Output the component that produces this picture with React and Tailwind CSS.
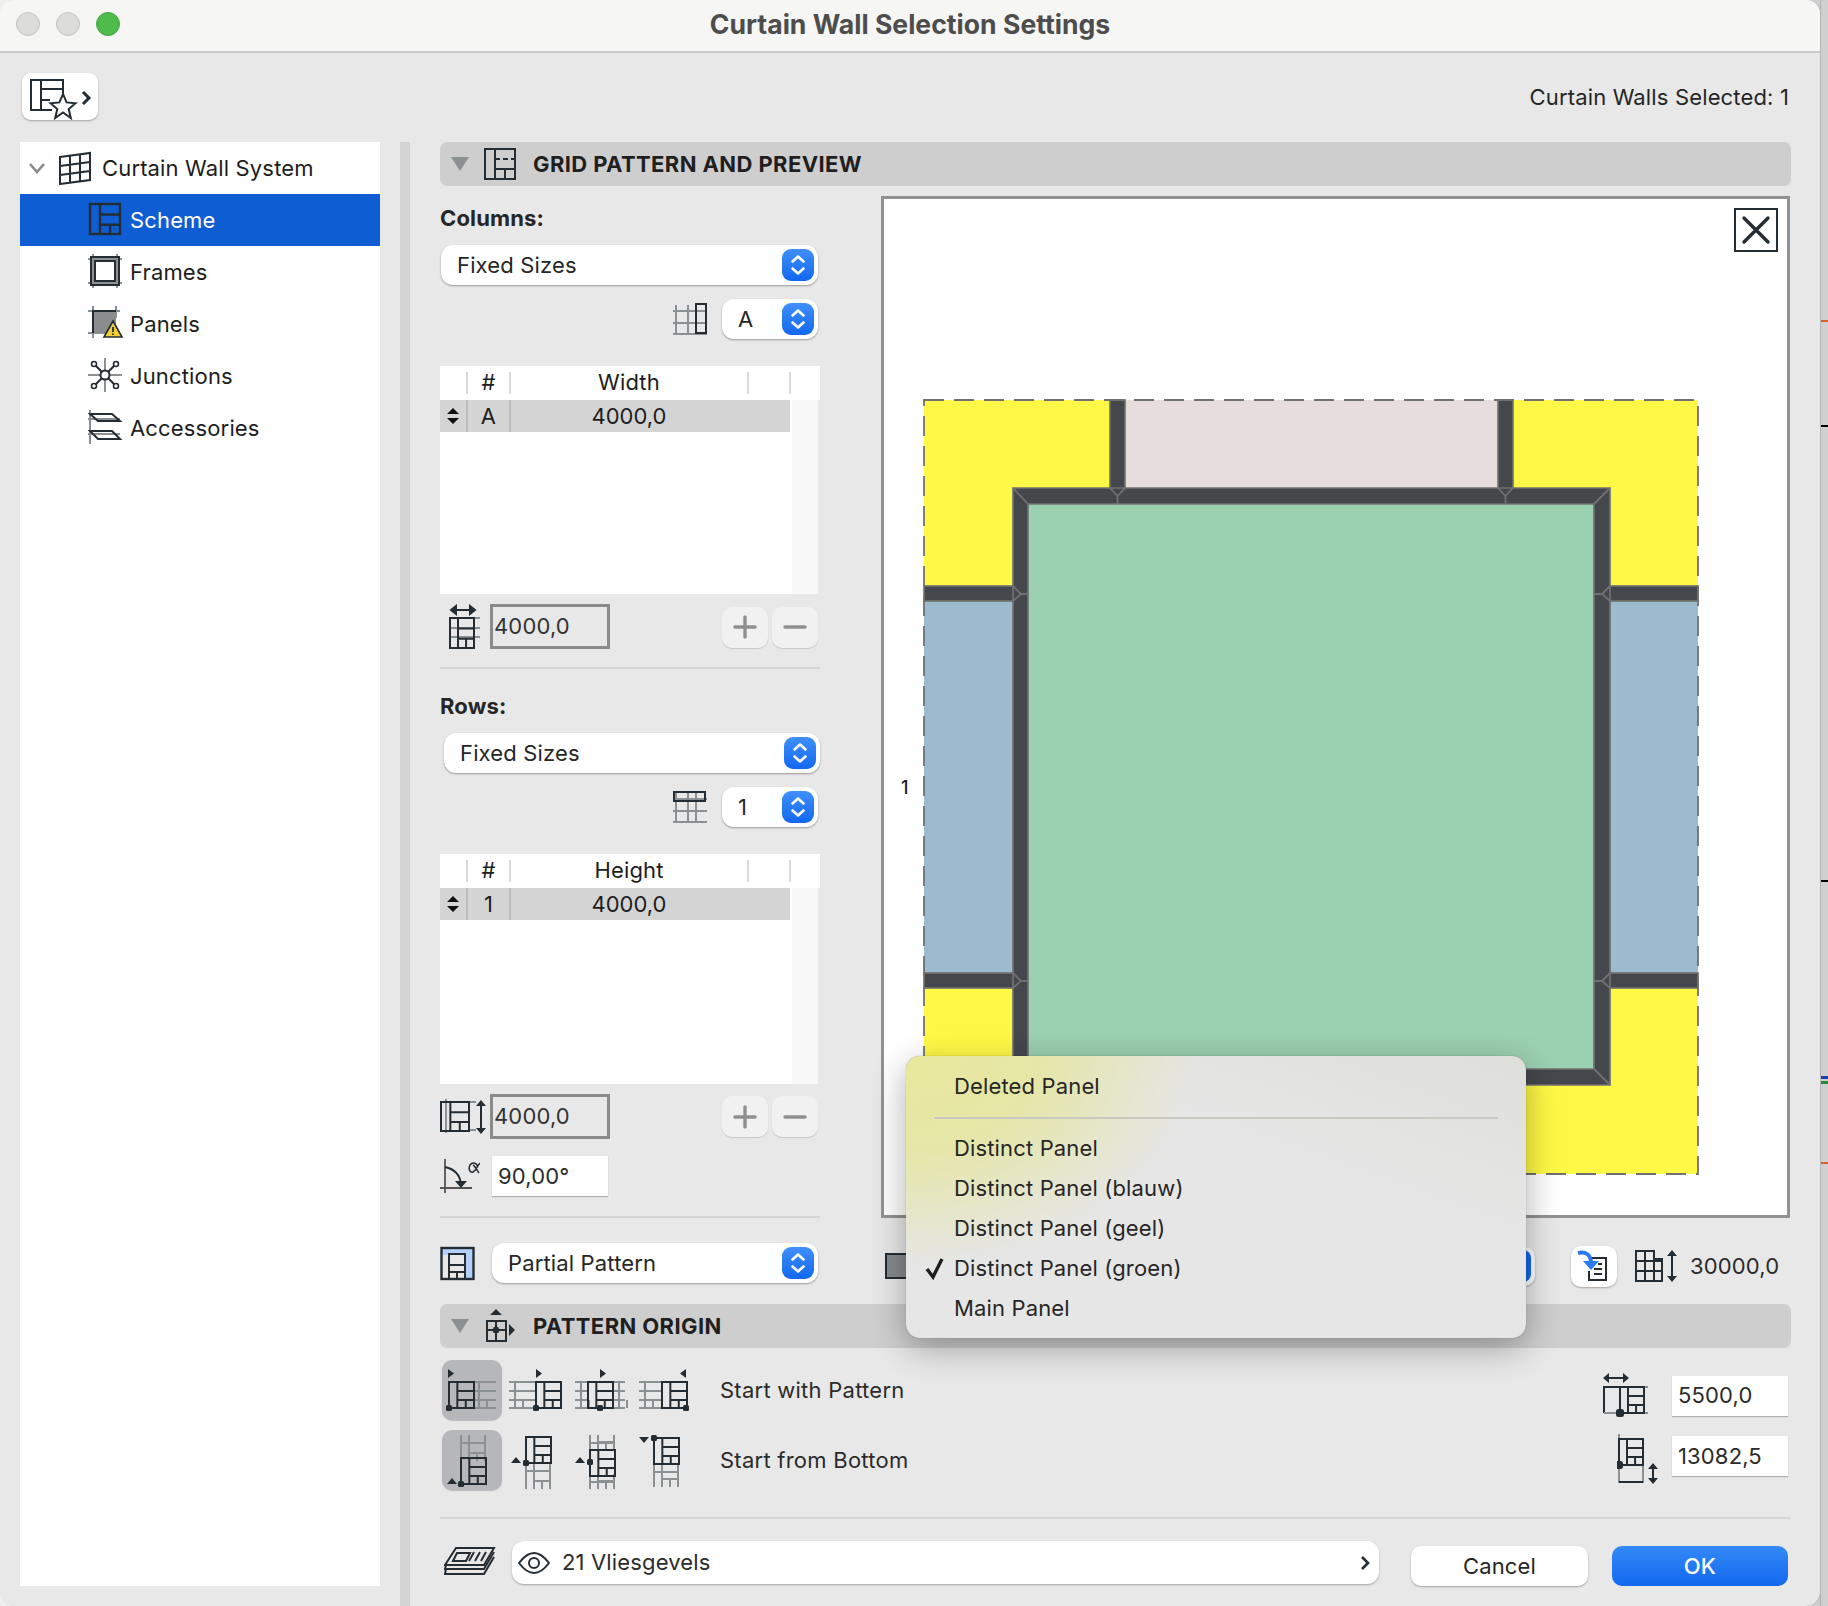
import React from 'react';

const ink = '#232d33';
const grey = '#8b9093';

// the dark "grid pattern" glyph used across the dialog
const Pat = ({ x = 0, y = 0, w = 25, h = 26, c = ink, sw = 2 }) => (
  <g fill="none" stroke={c} strokeWidth={sw}>
    <rect x={x} y={y} width={w} height={h} />
    <path d={`M${x + w / 3} ${y}V${y + h}M${x + w / 3} ${y + h * 0.35}H${x + w}M${x + w / 3} ${y + h * 0.69}H${x + w}M${x + w * 0.67} ${y + h * 0.69}V${y + h}`} />
  </g>
);

const GreyLinesH = ({ x1, x2, y = 22, c = grey }) => (
  <path
    fill="none"
    stroke={c}
    strokeWidth="2"
    d={`M${x1} ${y}H${x2}M${x1} ${y + 9}H${x2}M${x1} ${y + 18}H${x2}M${x1} ${y + 26}H${x2}M${x1 + 6} ${y}V${y + 26}M${x1 + 14} ${y + 18}V${y + 26}`}
  />
);

const GreyLinesV = ({ y1, y2, x = 20 }) => (
  <path
    fill="none"
    stroke={grey}
    strokeWidth="2"
    d={`M${x} ${y1}V${y2}M${x + 24} ${y1}V${y2}M${x + 8} ${y1}V${y2}M${x} ${y1 + 8}H${x + 24}M${x + 8} ${y2 - 8}H${x + 24}M${x + 16} ${y2 - 8}V${y2}`}
  />
);

const Dot = ({ x, y }) => <rect x={x - 3} y={y - 3} width="6" height="6" rx="1.5" fill={ink} />;

const ORIGIN_ICONS = [
  [
    <>
      <GreyLinesH x1={31} x2={54} />
      <Pat x={7} y={22} />
      <Dot x={7} y={48} />
      <path d="M6 9l6 4.5-6 4.5z" fill={ink} />
    </>,
    <>
      <GreyLinesH x1={3} x2={30} />
      <Pat x={30} y={22} />
      <Dot x={30} y={48} />
      <path d="M30 9l6 4.5-6 4.5z" fill={ink} />
    </>,
    <>
      <GreyLinesH x1={5} x2={18} />
      <GreyLinesH x1={43} x2={55} />
      <Pat x={18} y={22} />
      <Dot x={30} y={48} />
      <path d="M30 9l6 4.5-6 4.5z" fill={ink} />
    </>,
    <>
      <GreyLinesH x1={5} x2={28} />
      <Pat x={28} y={22} />
      <Dot x={52} y={48} />
      <path d="M52 9l-6 4.5 6 4.5z" fill={ink} />
    </>,
  ],
  [
    <>
      <GreyLinesV y1={5} y2={31} x={19} />
      <Pat x={19} y={28} />
      <Dot x={19} y={54} />
      <path d="M5 54l5-6 5 6z" fill={ink} />
    </>,
    <>
      <GreyLinesV y1={33} y2={59} />
      <Pat x={20} y={7} />
      <Dot x={20} y={33} />
      <path d="M5 33l5-6 5 6z" fill={ink} />
    </>,
    <>
      <GreyLinesV y1={5} y2={20} />
      <GreyLinesV y1={44} y2={59} />
      <Pat x={20} y={20} />
      <Dot x={20} y={32} />
      <path d="M5 33l5-6 5 6z" fill={ink} />
    </>,
    <>
      <GreyLinesV y1={34} y2={57} />
      <Pat x={20} y={8} />
      <Dot x={20} y={8} />
      <path d="M5 7h10l-5 6z" fill={ink} />
    </>,
  ],
];

const TREE = [
  {
    label: 'Scheme',
    active: true,
    icon: <Pat x={2} y={2} w={30} h={30} sw={2.4} />,
  },
  {
    label: 'Frames',
    icon: (
      <g fill="none" strokeWidth="2">
        <path stroke={grey} d="M0 5H34M0 29H34M5 0V34M29 0V34" />
        <rect x="3" y="3" width="28" height="28" stroke={ink} />
        <rect x="7" y="7" width="20" height="20" stroke={ink} />
      </g>
    ),
  },
  {
    label: 'Panels',
    icon: (
      <g>
        <path stroke={grey} strokeWidth="2" d="M0 5H32M0 27H24M5 0V32M28 0V12" />
        <rect x="5" y="5" width="23" height="22" fill="#8a8d8e" />
        <path stroke={ink} strokeWidth="2" fill="none" d="M5 27V5H28" />
        <path d="M25 15l9 16H16z" fill="#f5cf35" stroke={ink} strokeWidth="1.6" />
        <path d="M25 21v5M25 27.5v1.5" stroke={ink} strokeWidth="1.8" />
      </g>
    ),
  },
  {
    label: 'Junctions',
    icon: (
      <g fill="none">
        <path stroke={grey} strokeWidth="2" d="M17 0V34M0 17H34" />
        <path stroke={ink} strokeWidth="2" d="M7 7L27 27M27 7L7 27" />
        <circle cx="17" cy="17" r="4.5" fill="#fff" stroke={ink} strokeWidth="2" />
        <circle cx="6" cy="6" r="2.5" fill="#fff" stroke={ink} strokeWidth="1.6" />
        <circle cx="28" cy="6" r="2.5" fill="#fff" stroke={ink} strokeWidth="1.6" />
        <circle cx="6" cy="28" r="2.5" fill="#fff" stroke={ink} strokeWidth="1.6" />
        <circle cx="28" cy="28" r="2.5" fill="#fff" stroke={ink} strokeWidth="1.6" />
      </g>
    ),
  },
  {
    label: 'Accessories',
    icon: (
      <g fill="none">
        <path stroke={grey} strokeWidth="2" d="M2 0V34M0 9H32M0 24H32" />
        <path stroke={ink} strokeWidth="2" d="M2 4H24L32 11H10zM2 21H24L32 29H10z" />
      </g>
    ),
  },
];

const Stepper = () => (
  <span className="flex h-[32px] w-[32px] items-center justify-center rounded-[9px] bg-gradient-to-b from-[#3f8ffb] to-[#1067f0]">
    <svg width="32" height="32" fill="none" stroke="#fff" strokeWidth="2.6" strokeLinecap="round" strokeLinejoin="round">
      <path d="M10.5 12.5L16 7.5l5.5 5M10.5 19.5l5.5 5 5.5-5" />
    </svg>
  </span>
);

const Select = ({ value, className, pad = 'pl-[16px]' }) => (
  <div className={`flex h-[40px] items-center justify-between rounded-[12px] bg-white pr-[4px] text-[#262626] shadow-[0_1px_2px_rgba(0,0,0,0.35)] ${pad} ${className}`}>
    <span>{value}</span>
    <Stepper />
  </div>
);

const SmallGrid = ({ dark }) => (
  <svg width="36" height="34" fill="none" strokeWidth="2">
    <path stroke={grey} d="M1 9H35M1 21H35M1 32H35M4 3V33M16 3V33M24 3V33" />
    {dark === 'col' ? (
      <rect x="24" y="2" width="10" height="29" stroke={ink} />
    ) : (
      <rect x="2" y="2" width="31" height="9" stroke={ink} />
    )}
  </svg>
);

const GridTable = ({ title, id, height }) => (
  <div className={`flex w-[380px] flex-col bg-white ${height}`}>
    <div className="flex h-[34px] items-center pb-[1px] text-center">
      <span className="h-[22px] w-[28px] border-r-2 border-[#d9d9d9]" />
      <span className="flex h-[22px] w-[43px] items-center justify-center border-r-2 border-[#d9d9d9]">#</span>
      <span className="flex h-[22px] w-[238px] items-center justify-center border-r-2 border-[#d9d9d9]">{title}</span>
      <span className="h-[22px] w-[42px] border-r-2 border-[#d9d9d9]" />
    </div>
    <div className="flex flex-1 bg-[#e8e8e8]">
      <div className="w-[350px] bg-white">
        <div className="flex h-[32px] items-center bg-[#d4d4d4] text-center">
          <span className="flex h-full w-[28px] items-center justify-center border-r-2 border-[#bdbdbd]">
            <svg width="14" height="18" fill="#111">
              <path d="M7 1l6 6H1zM7 17l-6-6h12z" />
            </svg>
          </span>
          <span className="flex h-full w-[43px] items-center justify-center border-r-2 border-[#bdbdbd]">{id}</span>
          <span className="w-[236px] tracking-normal">4000,0</span>
        </div>
      </div>
      <div className="w-[2px] bg-white" />
      <div className="w-[26px] bg-[#f8f8f8]" />
    </div>
  </div>
);

const PlusMinus = () => (
  <div className="ml-auto mr-[2px] flex gap-[4px]">
    <span className="flex h-[41px] w-[46px] items-center justify-center rounded-[10px] bg-[#f1f1f1] shadow-[0_1px_1px_rgba(0,0,0,0.15)]">
      <svg width="24" height="24" stroke="#8f8f8f" strokeWidth="3.4" strokeLinecap="round">
        <path d="M12 2V22M2 12H22" />
      </svg>
    </span>
    <span className="flex h-[41px] w-[46px] items-center justify-center rounded-[10px] bg-[#f1f1f1] shadow-[0_1px_1px_rgba(0,0,0,0.15)]">
      <svg width="24" height="24" stroke="#8f8f8f" strokeWidth="3.4" strokeLinecap="round">
        <path d="M2 12H22" />
      </svg>
    </span>
  </div>
);

const ActiveInput = ({ value }) => (
  <div className="flex h-[45px] w-[120px] items-center border-[3px] border-[#8a8a8a] bg-[#e8e8e8] pl-[1px] text-[#333]">{value}</div>
);

const WhiteInput = ({ value, className = '' }) => (
  <div className={`flex h-[40px] w-[116px] items-center bg-white pl-[6px] text-[#2b2b2b] shadow-[0_1px_1px_rgba(0,0,0,0.25)] ${className}`}>{value}</div>
);

const SectionHead = ({ icon, title }) => (
  <div className="flex h-[44px] items-center rounded-[7px] bg-[#cecece]">
    <svg className="ml-[11px]" width="18" height="16">
      <path d="M0 1H18L9 15z" fill="#8b9093" />
    </svg>
    <span className="ml-[7px] flex w-[48px] justify-center">{icon}</span>
    <span className="ml-[9px] font-bold tracking-[0.4px] text-[#1f1f1f]">{title}</span>
  </div>
);

// the plan drawing inside the preview box, in page coordinates
const Plan = () => {
  const frame = { fill: '#44474c', stroke: '#717171', strokeWidth: 1.7 };
  const line = { fill: 'none', stroke: '#717171', strokeWidth: 1.8 };
  return (
    <svg width="903" height="1016" viewBox="884 199 903 1016" className="block">
      <rect x="924" y="400" width="774" height="774" fill="#fff846" />
      <rect x="1125" y="400" width="373" height="88" fill="#e7dddc" />
      <rect x="924" y="601" width="89" height="372" fill="#9cbbcf" />
      <rect x="1610" y="601" width="88" height="372" fill="#9cbbcf" />
      <rect x="1028" y="504" width="566" height="565" fill="#9bd0b0" />
      <rect x="1110" y="400" width="15" height="90" {...frame} />
      <rect x="1498" y="400" width="15" height="90" {...frame} />
      <rect x="924" y="586" width="91" height="15" {...frame} />
      <rect x="924" y="973" width="91" height="15" {...frame} />
      <rect x="1608" y="586" width="90" height="15" {...frame} />
      <rect x="1608" y="973" width="90" height="15" {...frame} />
      <path d="M1013 488H1610V1085H1013ZM1028 504V1069H1594V504Z" fillRule="evenodd" {...frame} />
      <path
        d="M1013 488L1028 504M1610 488L1594 504M1013 1085L1028 1069M1610 1085L1594 1069M1110 488L1117.5 496L1125 488M1117.5 496V504M1498 488L1505.5 496L1513 488M1505.5 496V504M1013 586L1021 594L1013 601M1021 594H1028M1013 973L1021 981L1013 988M1021 981H1028M1610 586L1602 594L1610 601M1602 594H1594M1610 973L1602 981L1610 988M1602 981H1594"
        {...line}
      />
      <rect x="924" y="400" width="774" height="774" fill="none" stroke="#717171" strokeWidth="1.8" strokeDasharray="20 10" />
    </svg>
  );
};

const MENU = ['Distinct Panel', 'Distinct Panel (blauw)', 'Distinct Panel (geel)', 'Distinct Panel (groen)', 'Main Panel'];

const PanelMenu = () => (
  <div className="absolute left-[906px] top-[1056px] z-20 h-[282px] w-[620px] rounded-[14px] bg-[#e6e6e6] bg-[radial-gradient(ellipse_290px_210px_at_0%_0%,#e8e89c_0%,#e6e6a8_45%,rgba(230,230,230,0)_100%),linear-gradient(200deg,#dedfd9_0%,#e6e6e6_35%)] text-[#262626] shadow-[0_10px_34px_rgba(0,0,0,0.32),0_0_1px_rgba(0,0,0,0.4)]">
    <div className="flex h-[61px] items-start pl-[48px] pt-[10px]">
      <span className="leading-[40px]">Deleted Panel</span>
    </div>
    <div className="ml-[28px] h-[2px] w-[564px] bg-[#c9c9c2]" />
    <div className="mt-[9px]">
      {MENU.map((item) => (
        <div key={item} className="flex h-[40px] items-center">
          <span className="flex w-[48px] justify-center pl-[9px]">
            {item.endsWith('(groen)') && (
              <svg width="20" height="24" fill="none" stroke="#1f1f1f" strokeWidth="3.4">
                <path d="M2 13l6 8L17 3" />
              </svg>
            )}
          </span>
          {item}
        </div>
      ))}
    </div>
  </div>
);

export default function App() {
  return (
    <div className="relative flex h-[1606px] w-[1828px] overflow-hidden bg-[#efefef] font-['Inter','Noto_Sans',sans-serif] text-[22px] tracking-[0.15px] text-[#1d1d1d]">
      <div className="z-10 flex h-[1606px] w-[1820px] shrink-0 flex-col overflow-hidden rounded-[14px] bg-[#e8e8e8] shadow-[1px_0_0_#b5b5b5]">
        {/* title bar */}
        <div className="relative flex h-[53px] shrink-0 items-center justify-center border-b-2 border-[#cbcbcb] bg-[#f6f6f4]">
          <div className="absolute left-[16px] top-[12px] flex gap-[16px]">
            <span className="h-[24px] w-[24px] rounded-full border border-[#c4c4c2] bg-[#dcdcda]" />
            <span className="h-[24px] w-[24px] rounded-full border border-[#c4c4c2] bg-[#dcdcda]" />
            <span className="h-[24px] w-[24px] rounded-full border border-[#3fa643] bg-[#4fbb4a]" />
          </div>
          <span className="mb-[2px] text-[26.6px] font-bold tracking-normal text-[#4d4d4d]">Curtain Wall Selection Settings</span>
        </div>

        {/* toolbar */}
        <div className="flex h-[89px] shrink-0 items-start justify-between pl-[22px] pr-[31px] pt-[20px]">
          <div className="flex h-[47px] w-[76px] items-center justify-center rounded-[9px] bg-white shadow-[0_1px_2px_rgba(0,0,0,0.3)]">
            <svg width="76" height="47" fill="none" stroke={ink} strokeWidth="2">
              <path d="M41 27V7H9V37H30M19 7V37M19 16H41M19 27H28" />
              <path d="M41 21l3.6 8.4 8.9.8-6.8 5.9 2.1 8.9L41 39.4 33.2 45l2.1-8.9-6.8-5.9 8.9-.8z" fill="#fff" />
              <path d="M61 19l6 6-6 6" strokeWidth="3" />
            </svg>
          </div>
          <span className="mt-[8px] text-[#262626]">Curtain Walls Selected: 1</span>
        </div>

        <div className="flex min-h-0 flex-1">
          {/* tree */}
          <div className="ml-[20px] h-[1444px] w-[360px] shrink-0 bg-white">
            <div className="flex h-[52px] items-center">
              <svg className="ml-[8px]" width="18" height="14" fill="none" stroke="#8a8a8a" strokeWidth="2.6">
                <path d="M2 3l7 8 7-8" />
              </svg>
              <svg className="ml-[12px]" width="34" height="34" fill="none" stroke={ink} strokeWidth="2">
                <path d="M2 6L32 2V29L2 33ZM12 5V32M22 4V30M2 15L32 11M2 24L32 20" />
              </svg>
              <span className="ml-[10px]">Curtain Wall System</span>
            </div>
            {TREE.map((row) => (
              <div key={row.label} className={`flex h-[52px] items-center pl-[68px] ${row.active ? 'bg-[#0f5dd3] text-white' : ''}`}>
                <svg width="36" height="36" className="shrink-0">
                  {row.icon}
                </svg>
                <span className="ml-[6px]">{row.label}</span>
              </div>
            ))}
          </div>
          <div className="ml-[20px] w-[10px] shrink-0 bg-[#d4d4d4]" />

          {/* settings column */}
          <div className="ml-[30px] flex w-[1351px] shrink-0 flex-col">
            <SectionHead
              title="GRID PATTERN AND PREVIEW"
              icon={
                <svg width="34" height="34" fill="none" stroke={ink} strokeWidth="2">
                  <rect x="2" y="2" width="30" height="30" />
                  <path d="M12 2V32M12 22H32M22 22V32" />
                  <path d="M12 12H32" strokeDasharray="5 3" />
                </svg>
              }
            />

            <div className="flex h-[1118px] shrink-0">
              <div className="flex w-[380px] shrink-0 flex-col">
                <div className="mt-[20px] h-[24px] font-bold leading-[24px] text-[#262626]">Columns:</div>
                <Select value="Fixed Sizes" className="ml-[1px] mr-[2px] mt-[15px]" />
                <div className="mr-[2px] mt-[14px] flex items-center justify-end gap-[14px]">
                  <SmallGrid dark="col" />
                  <Select value="A" className="w-[96px]" />
                </div>
                <div className="mt-[27px]">
                  <GridTable title="Width" id="A" height="h-[228px]" />
                </div>
                <div className="mt-[10px] flex h-[46px] items-center">
                  <svg className="ml-[8px]" width="32" height="46" fill="none" stroke={ink} strokeWidth="2">
                    <path d="M3 6H27M3 6l5-4v8zM27 6l-5-4v8z" fill={ink} />
                    <path stroke={grey} d="M2 14H32M2 24H32M2 33H32" />
                    <Pat x={2} y={14} w={24} h={30} />
                  </svg>
                  <div className="ml-[10px] -translate-y-[1px]">
                    <ActiveInput value="4000,0" />
                  </div>
                  <PlusMinus />
                </div>
                <div className="mt-[17px] h-[2px] bg-[#d6d6d6]" />

                <div className="mt-[25px] h-[24px] font-bold leading-[24px] text-[#262626]">Rows:</div>
                <Select value="Fixed Sizes" className="ml-[4px] mt-[15px]" />
                <div className="mr-[2px] mt-[14px] flex items-center justify-end gap-[14px]">
                  <SmallGrid dark="row" />
                  <Select value="1" className="w-[96px]" />
                </div>
                <div className="mt-[27px]">
                  <GridTable title="Height" id="1" height="h-[230px]" />
                </div>
                <div className="mt-[10px] flex h-[45px] items-center">
                  <svg width="48" height="36" fill="none" stroke={ink} strokeWidth="2">
                    <path stroke={grey} d="M28 3H36M28 31H36M6 0V34" />
                    <Pat x={1} y={3} w={28} h={29} />
                    <path d="M41 4V32" />
                    <path d="M41 1l5 6H36zM41 35l-5-6h10z" fill={ink} stroke="none" />
                  </svg>
                  <div className="ml-[2px]">
                    <ActiveInput value="4000,0" />
                  </div>
                  <PlusMinus />
                </div>
                <div className="mt-[17px] flex items-center">
                  <svg width="40" height="38" fill="none" stroke={ink} strokeWidth="1.8">
                    <path stroke="#555" d="M5 2V36M0 31H32" />
                    <path d="M5 10C14 12 20 18 21 27" />
                    <path d="M15 24h12l-6 7z" fill={ink} stroke="none" />
                    <path d="M38 10C36 5 32 5 30 8C28 12 30 16 33 15C36 14 37 9 40 6M33 8C35 9 37 13 39 16" strokeWidth="1.5" />
                  </svg>
                  <WhiteInput value="90,00°" className="ml-[12px]" />
                </div>
                <div className="mt-[20px] h-[2px] bg-[#d6d6d6]" />
                <div className="mt-[25px] flex items-center">
                  <svg width="36" height="36" fill="none" stroke={ink} strokeWidth="2.4">
                    <path d="M2 3H34V34H25V10H2Z" fill="#b1d0fb" stroke="none" />
                    <rect x="1.5" y="3" width="32" height="31" />
                    <path d="M9 9H25V34H9ZM9 20H25M9 27H25M17 27V34" strokeWidth="2" />
                  </svg>
                  <Select value="Partial Pattern" className="ml-[16px] mr-[2px] flex-1" />
                </div>
              </div>

              <div className="ml-[61px] flex w-[909px] shrink-0 flex-col">
                <div className="relative mt-[10px] h-[1022px] border-[3px] border-[#929292] bg-white">
                  <Plan />
                  <span className="absolute left-[17px] top-[575px] text-[18px] font-medium">1</span>
                  <svg className="absolute left-[850px] top-[9px]" width="44" height="44" fill="none" stroke={ink}>
                    <rect x="1" y="1" width="42" height="42" strokeWidth="2" />
                    <path d="M10 10L34 34M34 10L10 34" strokeWidth="3.4" strokeLinecap="round" />
                  </svg>
                </div>
                <div className="flex h-[86px] items-center pt-[10px]">
                  <svg className="ml-[2px]" width="26" height="32" fill="#868a8d" stroke={ink} strokeWidth="2">
                    <rect x="3" y="4" width="23" height="24" />
                  </svg>
                  <div className="ml-[22px] flex h-[39px] w-[604px] items-center justify-end rounded-[10px] bg-white pr-[4px] shadow-[0_1px_2px_rgba(0,0,0,0.3)]">
                    <span className="h-[32px] w-[32px] rounded-[8px] bg-[#1268f0]" />
                  </div>
                  <div className="ml-[36px] flex h-[41px] w-[46px] items-center justify-center rounded-[10px] bg-white shadow-[0_1px_2px_rgba(0,0,0,0.3)]">
                    <svg width="36" height="34" fill="none">
                      <path d="M13 9H30V31H13V22M18 20H26M18 25H26M22 15H26" stroke={ink} strokeWidth="2" />
                      <path d="M2 4C10 2 15 6 15 14" stroke="#2a7bf0" strokeWidth="4" />
                      <path d="M7 12h16l-8 9z" fill="#2a7bf0" />
                    </svg>
                  </div>
                  <svg className="ml-[17px]" width="46" height="34" fill="none" stroke={ink} strokeWidth="2">
                    <path d="M2 2H20V10H28V32H2ZM11 2V32M20 10V32M2 12H28M2 22H28" />
                    <path d="M38 4V30" />
                    <path d="M38 1l5 6H33zM38 33l-5-6h10z" fill={ink} stroke="none" />
                  </svg>
                  <span className="ml-[10px] text-[#2b2b2b]">30000,0</span>
                </div>
              </div>
            </div>

            <SectionHead
              title="PATTERN ORIGIN"
              icon={
                <svg width="34" height="34" fill={ink} stroke={ink} strokeWidth="2">
                  <path fill="none" d="M4 12H23V32H4ZM13 12V32M4 21H23" />
                  <rect x="10" y="18" width="6" height="6" rx="1.5" stroke="none" />
                  <path stroke="none" d="M13 0l6 6H7zM32 21l-6-6v12z" />
                </svg>
              }
            />

            <div className="mt-[11px] flex h-[61px] items-center pl-[2px] pr-[3px]">
              <div className="flex gap-[4px]">
                {ORIGIN_ICONS[0].map((icon, i) => (
                  <span key={i} className={`h-[60px] w-[60px] rounded-[10px] ${i === 0 ? 'bg-[#b6b7ba] shadow-[0_1px_1px_rgba(0,0,0,0.2)]' : ''}`}>
                    <svg width="60" height="60">{icon}</svg>
                  </span>
                ))}
              </div>
              <span className="ml-[26px] pt-[2px] tracking-[0.25px] text-[#2b2b2b]">Start with Pattern</span>
              <svg className="ml-auto mr-[22px] mt-[11px]" width="48" height="44" fill="none" stroke={ink} strokeWidth="2">
                <path d="M4 5H24" />
                <path d="M1 5l6-5v10zM27 5l-6-5v10z" fill={ink} stroke="none" />
                <path d="M2 40V14H18" />
                <path stroke={grey} d="M2 40H46M18 14H46" />
                <Pat x={18} y={14} w={24} h={26} />
                <Dot x={18} y={40} />
              </svg>
              <WhiteInput value="5500,0" className="mt-[12px]" />
            </div>
            <div className="mt-[9px] flex h-[61px] items-center pl-[2px] pr-[3px]">
              <div className="flex gap-[4px]">
                {ORIGIN_ICONS[1].map((icon, i) => (
                  <span key={i} className={`h-[60px] w-[60px] rounded-[10px] ${i === 0 ? 'bg-[#b6b7ba] shadow-[0_1px_1px_rgba(0,0,0,0.2)]' : ''}`}>
                    <svg width="60" height="60">{icon}</svg>
                  </span>
                ))}
              </div>
              <span className="ml-[26px] pt-[2px] tracking-[0.25px] text-[#2b2b2b]">Start from Bottom</span>
              <svg className="ml-auto mr-[11px] mb-[2px]" width="44" height="50" fill="none" stroke={ink} strokeWidth="2">
                <path stroke={grey} d="M2 0V48H26V30" />
                <Pat x={2} y={5} w={24} h={26} />
                <path d="M2 48H26" />
                <Dot x={2} y={31} />
                <path d="M36 33V46" />
                <path d="M36 29l5 6H31zM36 50l-5-6h10z" fill={ink} stroke="none" />
              </svg>
              <WhiteInput value="13082,5" className="mb-[7px]" />
            </div>

            <div className="mt-[27px] h-[2px] bg-[#d6d6d6]" />

            <div className="mt-[22px] flex items-start">
              <svg className="ml-[4px] mt-[6px]" width="52" height="32" fill="none" stroke={ink} strokeWidth="2">
                <path d="M12 1H50L40 18H1Z" fill="#e8e8e8" />
                <path d="M2 18L1 22L40 22L50 5M2 22L1 27H40L50 10" />
                <path d="M13 6H26L22 14H9ZM30 5L25 14M36 5L31 14M42 5L37 14" />
              </svg>
              <div className="ml-[16px] flex h-[43px] w-[867px] items-center rounded-[12px] bg-white pl-[6px] pr-[8px] shadow-[0_1px_2px_rgba(0,0,0,0.3)]">
                <svg width="32" height="22" fill="none" stroke={ink} strokeWidth="2">
                  <path d="M1 11C7 3 12 1 16 1C20 1 25 3 31 11C25 19 20 21 16 21C12 21 7 19 1 11Z" />
                  <circle cx="16" cy="11" r="5" />
                </svg>
                <span className="ml-[12px] text-[#2b2b2b]">21 Vliesgevels</span>
                <svg className="ml-auto" width="12" height="16" fill="none" stroke={ink} strokeWidth="2.6">
                  <path d="M3 2l6 6-6 6" />
                </svg>
              </div>
              <div className="ml-[32px] mt-[5px] flex h-[40px] w-[177px] items-center justify-center rounded-[10px] bg-white text-[#262626] shadow-[0_1px_2px_rgba(0,0,0,0.3)]">Cancel</div>
              <div className="ml-[24px] mt-[5px] flex h-[40px] w-[176px] items-center justify-center rounded-[10px] bg-gradient-to-b from-[#3389f7] to-[#1268ee] font-medium text-white">OK</div>
            </div>
          </div>
        </div>
      </div>

      {/* sliver of the window behind */}
      <svg className="-ml-[14px] shrink-0" width="22" height="1606">
        <rect width="22" height="1606" fill="#d0d0d0" />
        <rect x="14" width="1" height="1606" fill="#b0b0b0" />
        <rect x="14" y="320" width="8" height="2" fill="#d2622a" />
        <rect x="14" y="425" width="8" height="2" fill="#000" />
        <rect x="14" y="880" width="8" height="2" fill="#000" />
        <rect x="14" y="1076" width="8" height="3" fill="#1b3fae" />
        <rect x="14" y="1081" width="8" height="3" fill="#2a8a3a" />
        <rect x="14" y="1162" width="8" height="2" fill="#d2622a" />
      </svg>

      <PanelMenu />
    </div>
  );
}
